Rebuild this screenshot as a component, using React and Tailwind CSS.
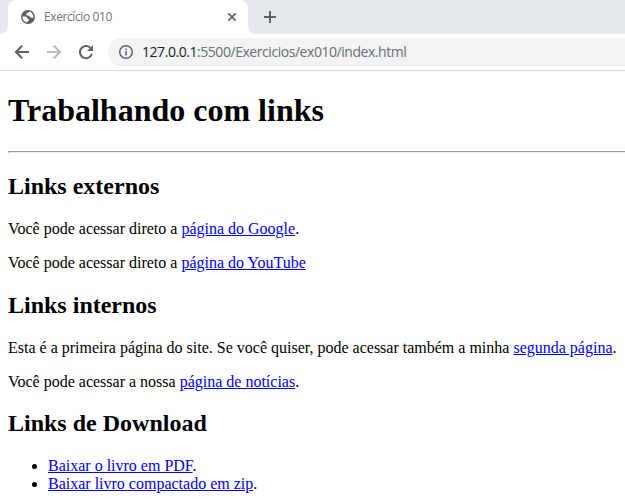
const link = "text-[#0000ee] underline";

function GlobeIcon() {
  return (
    <svg className="size-4 shrink-0" viewBox="0 0 16 16">
      <circle cx="8" cy="8" r="7" fill="#5f6368" />
      <path d="M9.2 2.6 C8.6 4.2 6.2 3.8 6.3 5.6 C6.4 7.4 9.4 6.2 10 8 C10.3 9 11.6 8.8 13.4 8.9 A5.6 5.6 0 0 0 9.2 2.6Z M2.5 7.6 C4.6 7.4 6.8 7.6 7.3 9 C7.7 10.2 9 9.8 9.1 11.2 C9 12.2 7.3 11.9 6.8 13.4 A5.6 5.6 0 0 1 2.5 7.6Z" fill="#fff" />
    </svg>
  );
}

export default function App() {
  return (
    <div className="h-[499px] w-full overflow-hidden bg-white font-['Liberation_Serif',serif] text-black">
      <div className="flex h-[34px] bg-white text-[#5f6368]">
        <div className="w-2 rounded-br-lg bg-[#e5e9ec]" />
        <div className="w-[240px] bg-[#e5e9ec]">
          <div className="flex h-full items-center rounded-t-lg bg-white pl-3 pr-2 font-['Open_Sans','Noto_Sans',sans-serif]">
            <GlobeIcon />
            <span className="ml-2 flex-1 text-xs tracking-[-0.4px] text-[#707377]">Exercício 010</span>
            <svg className="size-4" viewBox="0 0 16 16" fill="none" stroke="currentColor" strokeWidth="1.7"><path d="m4.3 4.3 7.4 7.4M11.7 4.3l-7.4 7.4" /></svg>
          </div>
        </div>
        <div className="flex flex-1 items-center rounded-bl-lg bg-[#e5e9ec] pl-[14px]">
          <svg className="size-4" viewBox="0 0 16 16" fill="none" stroke="currentColor" strokeWidth="2"><path d="M8 2v12M2 8h12" /></svg>
        </div>
      </div>
      <div className="flex h-[37px] items-center border-b border-[#dadce0] pl-[14px] text-[#5f6368]">
        <svg className="size-4" viewBox="0 0 16 16" fill="none" stroke="currentColor" strokeWidth="2"><path d="M15 8H2M8.2 1.7 1.9 8l6.3 6.3" /></svg>
        <svg className="ml-4 size-4 text-[#babcbe]" viewBox="0 0 16 16" fill="none" stroke="currentColor" strokeWidth="2"><path d="M1 8h13M7.8 1.7 14.1 8l-6.3 6.3" /></svg>
        <svg className="ml-4 size-4" viewBox="0 0 16 16"><path d="M13.9 9.7A6.1 6.1 0 1 1 12.3 3.7" fill="none" stroke="currentColor" strokeWidth="2" /><path d="M15 1v6H9z" fill="currentColor" /></svg>
        <div className="ml-[14px] flex h-7 flex-1 items-center rounded-l-full bg-[#f1f3f4] pl-[10px] font-['Open_Sans','Noto_Sans',sans-serif] text-sm tracking-[-0.45px]">
          <svg className="size-4" viewBox="0 0 16 16" fill="none" stroke="currentColor" strokeWidth="1.5"><circle cx="8" cy="8" r="6.3" /><path d="M8 7v4.5M8 4.5V6" /></svg>
          <span className="ml-2 text-[#6b6e73]"><span className="text-[#202124]">127.0.0.1</span>:5500/Exercicios/ex010/index.html</span>
        </div>
      </div>
      <main className="pl-2 text-base leading-[18px]">
        <h1 className="pt-[21px] text-[32px] font-bold leading-[37px]">Trabalhando com links</h1>
        <hr className="mt-[22px] h-0.5 border border-r-0 border-b-[#eee] border-l-[#9a9a9a] border-t-[#9a9a9a]" />
        <h2 className="mt-5 text-2xl font-bold leading-[27px]">Links externos</h2>
        <p className="mt-5">Você pode acessar direto a <a href="#" className={link}>página do Google</a>.</p>
        <p className="mt-4">Você pode acessar direto a <a href="#" className={link}>página do YouTube</a></p>
        <h2 className="mt-5 text-2xl font-bold leading-[27px]">Links internos</h2>
        <p className="mt-5">Esta é a primeira página do site. Se você quiser, pode acessar também a minha <a href="#" className={link}>segunda página</a>.</p>
        <p className="mt-4">Você pode acessar a nossa <a href="#" className={link}>página de notícias</a>.</p>
        <h2 className="mt-[19px] text-2xl font-bold leading-[27px]">Links de Download</h2>
        <ul className="mt-5 list-disc pl-10">
          <li><a href="#" className={link}>Baixar o livro em PDF</a>.</li>
          <li><a href="#" className={link}>Baixar livro compactado em zip</a>.</li>
        </ul>
      </main>
    </div>
  );
}
